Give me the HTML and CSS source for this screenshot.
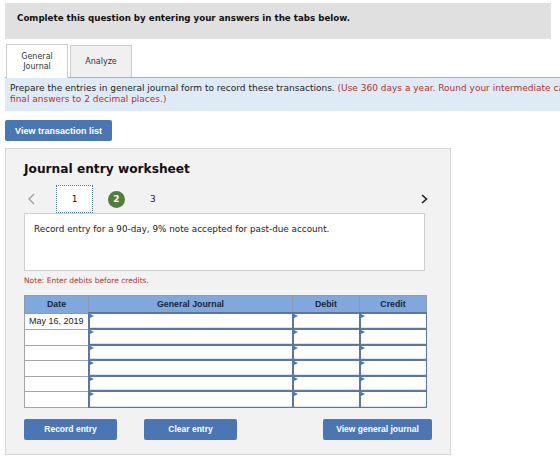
FILE: index.html
```html
<!DOCTYPE html>
<html lang="en">
    <head>
        <title>Journal entry worksheet</title>
        <meta charset="utf-8">
        <link rel="stylesheet" href="styles.css">
    </head>
    <body>
        <div class="page">
            <div class="prompt">Complete this question by entering your answers in the tabs below.</div>

            <!-- question tabs -->
            <div class="tabs">
                <div class="tab tab-active">General<br>Journal</div>
                <div class="tab">Analyze</div>
            </div>
            <div class="instructions">
                Prepare the entries in general journal form to record these transactions.
                <span class="red">(Use 360 days a year. Round your intermediate calculations and<br>final answers to 2 decimal places.)</span>
            </div>

            <button class="btn btn-list">View transaction list</button>

            <div class="worksheet">
                <h3>Journal entry worksheet</h3>

                <!-- entry navigation -->
                <div class="steps">
                    <span class="arrow">
                        <svg width="7" height="12" viewBox="0 0 7 12"><polyline points="6,1 1,6 6,11" fill="none" stroke="#9a9a9a" stroke-width="1.2"/></svg>
                    </span>
                    <span class="step step-current">1</span>
                    <span class="step step-done">2</span>
                    <span class="step">3</span>
                    <span class="arrow arrow-next">
                        <svg width="7" height="10" viewBox="0 0 7 10"><polyline points="1,1 5.5,5 1,9" fill="none" stroke="#222" stroke-width="1.6"/></svg>
                    </span>
                </div>

                <div class="desc">Record entry for a 90-day, 9% note accepted for past-due account.</div>
                <p class="note">Note: Enter debits before credits.</p>

                <table class="journal">
                    <thead>
                        <tr>
                            <th class="col-date">Date</th>
                            <th class="col-gj">General Journal</th>
                            <th class="col-amt">Debit</th>
                            <th>Credit</th>
                        </tr>
                    </thead>
                    <tbody>
                        <tr><td class="date">May 16, 2019</td><td class="cell"></td><td class="cell"></td><td class="cell"></td></tr>
                        <tr><td class="date"></td><td class="cell"></td><td class="cell"></td><td class="cell"></td></tr>
                        <tr class="short"><td class="date"></td><td class="cell"></td><td class="cell"></td><td class="cell"></td></tr>
                        <tr><td class="date"></td><td class="cell"></td><td class="cell"></td><td class="cell"></td></tr>
                        <tr class="short"><td class="date"></td><td class="cell"></td><td class="cell"></td><td class="cell"></td></tr>
                        <tr><td class="date"></td><td class="cell"></td><td class="cell"></td><td class="cell"></td></tr>
                    </tbody>
                </table>

                <div class="actions">
                    <button class="btn btn-entry">Record entry</button>
                    <button class="btn btn-entry">Clear entry</button>
                    <button class="btn btn-journal">View general journal</button>
                </div>
            </div>
        </div>
    </body>
</html>
```

FILE: styles.css
```css
html, body {
    margin: 0;
    padding: 0;
    background-color: #fff;
    overflow: hidden;
}

body {
    font-family: "DejaVu Sans", Verdana, sans-serif;
    color: #222;
}

.page {
    width: 546px;
    padding: 3px 0 0 5px;
}

.prompt {
    height: 36px;
    box-sizing: border-box;
    padding: 9px 12px 0 12px;
    background-color: #e0e0e0;
    font-size: 8.7px;
    font-weight: bold;
    line-height: 13px;
    color: #111;
}

.tabs {
    display: flex;
    gap: 2px;
    margin-top: 5px;
    padding-left: 1px;
    align-items: flex-end;
}

.tab {
    width: 62px;
    height: 32px;
    box-sizing: border-box;
    border: 1px solid #ccc;
    border-bottom: none;
    background-color: #f0f0f0;
    display: flex;
    align-items: center;
    justify-content: center;
    text-align: center;
    font-size: 8px;
    line-height: 10px;
    color: #333;
}

.tab-active {
    height: 34px;
    margin-bottom: -1px;
    background-color: #fff;
    position: relative;
    padding-top: 1px;
}

.instructions {
    width: 700px;
    box-sizing: border-box;
    border-top: 1px solid #a9b2bc;
    background-color: #deebf7;
    padding: 5px 5px 6px 5px;
    font-size: 9px;
    line-height: 11px;
    white-space: nowrap;
}

.red {
    color: #b8312b;
}

.btn {
    border: none;
    border-radius: 2px;
    background-color: #4a76b3;
    color: #fff;
    font-family: "Liberation Sans", Arial, sans-serif;
    font-size: 8.5px;
    font-weight: bold;
    padding: 0;
    height: 21px;
}

.btn-list {
    display: block;
    width: 107px;
    margin-top: 9px;
    font-size: 9px;
}

.worksheet {
    width: 446px;
    height: 307px;
    box-sizing: border-box;
    margin-top: 7px;
    padding: 12px 23px 0 18px;
    border: 1px solid #d6d6d6;
    background-color: #f2f2f2;
}

.worksheet h3 {
    margin: 0;
    font-size: 12.2px;
    line-height: 16px;
    color: #111;
}

.steps {
    display: flex;
    align-items: center;
    height: 28px;
    margin-top: 8px;
}

.arrow {
    display: flex;
    align-items: center;
    width: 8px;
    margin-left: 4px;
}

.arrow-next {
    margin-left: auto;
    margin-right: -2px;
}

.step {
    font-size: 9px;
    text-align: center;
}

.step-current {
    width: 37px;
    height: 28px;
    box-sizing: border-box;
    margin-left: 20px;
    border: 1px dotted #4a76b3;
    background-color: #fff;
    line-height: 26px;
}

.step-done {
    width: 17px;
    height: 17px;
    margin-left: 15px;
    border-radius: 50%;
    background-color: #4e7f3c;
    color: #fff;
    font-weight: bold;
    line-height: 17px;
}

.step-done + .step {
    margin-left: 25px;
}

.desc {
    width: 401px;
    height: 58px;
    box-sizing: border-box;
    border: 1px solid #cfcfcf;
    background-color: #fff;
    padding: 10px 9px;
    font-size: 8.8px;
    line-height: 11px;
}

.note {
    margin: 5px 0 0 0;
    font-size: 7.5px;
    line-height: 10px;
    color: #b8312b;
}

.journal {
    margin-top: 9px;
    width: 403px;
    border-collapse: collapse;
    font-family: "Liberation Sans", Arial, sans-serif;
    font-size: 8.8px;
    table-layout: fixed;
}

.journal th {
    height: 16px;
    padding: 0;
    border: 1px solid #8c9bb0;
    background-color: #80a8dd;
    color: #1d2633;
    font-weight: bold;
}

.col-date {
    width: 63px;
}

.col-gj {
    width: 203px;
}

.col-amt {
    width: 66px;
}

.journal td {
    height: 16px;
    padding: 0;
    box-sizing: border-box;
    background-color: #fff;
}

.journal tr.short td {
    height: 15px;
}

.journal td.date {
    border: 1px solid #a5a5a5;
    padding-left: 4px;
    font-size: 9px;
    color: #222;
}

.journal td.cell {
    position: relative;
    border: 1px solid #5a77a2;
    border-top-width: 2px;
    border-left-width: 2px;
    box-shadow: inset 0 -1px 0 #d9e2f0;
}

/* little marker in the corner of each input */
.journal td.cell::before {
    content: "";
    position: absolute;
    top: 0;
    left: 0;
    border-left: 4px solid #3f78c8;
    border-top: 2px solid transparent;
    border-bottom: 2px solid transparent;
}

.actions {
    display: flex;
    gap: 27px;
    width: 408px;
    margin-top: 11px;
}

.btn-entry {
    width: 93px;
}

.btn-journal {
    width: 109px;
    margin-left: auto;
}
```
